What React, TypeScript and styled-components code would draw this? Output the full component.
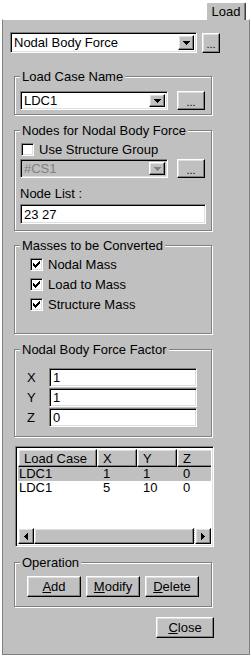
import styled, { createGlobalStyle, css } from 'styled-components';

const GlobalStyle = createGlobalStyle`
  html, body {
    margin: 0;
    padding: 0;
    background: #fff;
  }
  body {
    font-family: "Liberation Sans", Arial, sans-serif;
    font-size: 13px;
    color: #000;
  }
  * {
    box-sizing: border-box;
  }
`;

const face = '#c0c0c0';

const raised = css`
  border: 1px solid;
  border-color: #fff #000 #000 #fff;
  box-shadow: inset -1px -1px 0 #808080, inset 1px 1px 0 #dfdfdf;
  background: ${face};
`;

const sunken = css`
  border: 1px solid;
  border-color: #808080 #fff #fff #808080;
  box-shadow: inset 1px 1px 0 #000, inset -1px -1px 0 #dfdfdf;
`;

const Window = styled.div`
  width: 251px;
  height: 657px;
  display: flex;
  flex-direction: column;
`;

const TabStrip = styled.div`
  height: 19px;
  display: flex;
  justify-content: flex-end;
  align-items: flex-end;
  padding-right: 5px;
`;

const Tab = styled.div`
  position: relative;
  z-index: 1;
  width: 40px;
  height: 18px;
  margin-bottom: -1px;
  background: ${face};
  border-left: 1px solid #fff;
  border-top: 1px solid #fff;
  border-right: 1px solid #404040;
  border-radius: 2px 2px 0 0;
  box-shadow: inset -1px 0 0 #808080;
  display: flex;
  align-items: center;
  justify-content: center;
  line-height: 15px;
`;

const Panel = styled.div`
  margin-left: 2px;
  width: 248px;
  height: 636px;
  background: ${face};
  border: 1px solid #808080;
  border-top-color: #fff;
  padding: 12px 0 0 7px;
  display: flex;
  flex-direction: column;
  align-items: flex-start;
`;

const Row = styled.div<{ $gap: number }>`
  display: flex;
  align-items: center;
  gap: ${(p) => p.$gap}px;
`;

const Combo = styled.div<{ $w: number; $h: number; $disabled?: boolean }>`
  ${sunken}
  width: ${(p) => p.$w}px;
  height: ${(p) => p.$h}px;
  background: ${(p) => (p.$disabled ? face : '#fff')};
  color: ${(p) => (p.$disabled ? '#808080' : '#000')};
  display: flex;
  align-items: stretch;
  padding: 2px 2px 2px 3px;
`;

const ComboText = styled.div`
  flex: 1;
  display: flex;
  align-items: center;
  line-height: 15px;
  white-space: nowrap;
  overflow: hidden;
`;

const ArrowBtn = styled.div<{ $w?: number }>`
  ${raised}
  width: ${(p) => p.$w ?? 16}px;
  flex: none;
  display: flex;
  align-items: center;
  justify-content: center;
`;

const Button = styled.button<{ $w: number; $h: number }>`
  ${raised}
  width: ${(p) => p.$w}px;
  height: ${(p) => p.$h}px;
  padding: 0;
  font-family: inherit;
  font-size: 13px;
  color: #000;
  line-height: 15px;
  display: flex;
  align-items: center;
  justify-content: center;
  cursor: default;

  u {
    text-decoration: underline;
    text-underline-offset: 1px;
  }
`;

const Dots = styled.span`
  font-size: 11px;
  padding-top: 3px;
  letter-spacing: 0;
`;

const Group = styled.div<{ $mt: number; $pad: string }>`
  position: relative;
  margin: ${(p) => p.$mt}px 0 0 4px;
  width: 198px;
  border: 1px solid #808080;
  box-shadow: inset 1px 1px 0 #fff, 1px 1px 0 #fff;
  padding: ${(p) => p.$pad};
  display: flex;
  flex-direction: column;
  align-items: flex-start;
`;

const Legend = styled.span`
  position: absolute;
  top: -8px;
  left: 5px;
  padding: 0 2px;
  background: ${face};
  line-height: 15px;
  white-space: nowrap;
`;

const CheckRow = styled.label<{ $ml: number }>`
  display: flex;
  align-items: center;
  gap: 5px;
  height: 13px;
  margin-left: ${(p) => p.$ml}px;
  line-height: 15px;
`;

const CheckList = styled.div`
  display: flex;
  flex-direction: column;
  gap: 7px;
  margin-left: 10px;
`;

const Box = styled.span`
  ${sunken}
  width: 13px;
  height: 13px;
  background: #fff;
  display: flex;
  padding: 2px 0 0 2px;
  flex: none;
`;

const FieldLabel = styled.div<{ $mt: number }>`
  margin-top: ${(p) => p.$mt}px;
  line-height: 15px;
`;

const TextBox = styled.div<{ $w: number; $h: number; $mt?: number }>`
  ${sunken}
  width: ${(p) => p.$w}px;
  height: ${(p) => p.$h}px;
  margin-top: ${(p) => p.$mt ?? 0}px;
  background: #fff;
  padding: 0 3px;
  display: flex;
  align-items: center;
  line-height: 15px;
`;

const FactorGrid = styled.div`
  display: grid;
  grid-template-columns: 22px 148px;
  grid-auto-rows: 20px;
  align-items: center;
  padding-left: 7px;
`;

const Axis = styled.span`
  line-height: 15px;
`;

const List = styled.div`
  ${sunken}
  margin: 9px 0 0 5px;
  width: 199px;
  height: 101px;
  background: #fff;
  padding: 2px;
  display: flex;
  flex-direction: column;
`;

const HeaderRow = styled.div`
  display: flex;
  height: 18px;
  overflow: hidden;
  flex: none;
`;

const HeadCell = styled.div<{ $w: number }>`
  ${raised}
  width: ${(p) => p.$w}px;
  flex: none;
  padding-left: 5px;
  line-height: 15px;
  display: flex;
  align-items: center;
`;

const DataRow = styled.div<{ $selected?: boolean }>`
  display: flex;
  height: 14px;
  line-height: 14px;
  background: ${(p) => (p.$selected ? face : '#fff')};
  flex: none;
`;

const DataCell = styled.div<{ $w: number; $pl: number }>`
  width: ${(p) => p.$w}px;
  flex: none;
  padding-left: ${(p) => p.$pl}px;
  white-space: nowrap;
`;

const Spacer = styled.div`
  flex: 1;
`;

const HScroll = styled.div`
  display: flex;
  height: 16px;
  flex: none;
`;

const Thumb = styled.div`
  ${raised}
  width: 160px;
`;

const Track = styled.div`
  flex: 1;
  background: repeating-conic-gradient(#fff 0 25%, ${face} 0 50%) 0 0 / 2px 2px;
`;

const CloseWrap = styled.div`
  margin: 10px 0 0 146px;
`;

function Tri({ dir, color = '#000' }: { dir: 'down' | 'left' | 'right'; color?: string }) {
  const rects =
    dir === 'down'
      ? [
          [0, 0, 7, 1],
          [1, 1, 5, 1],
          [2, 2, 3, 1],
          [3, 3, 1, 1],
        ]
      : dir === 'left'
      ? [
          [0, 3, 1, 1],
          [1, 2, 1, 3],
          [2, 1, 1, 5],
          [3, 0, 1, 7],
        ]
      : [
          [0, 0, 1, 7],
          [1, 1, 1, 5],
          [2, 2, 1, 3],
          [3, 3, 1, 1],
        ];
  const w = dir === 'down' ? 7 : 4;
  const h = dir === 'down' ? 4 : 7;
  return (
    <svg width={w} height={h} viewBox={`0 0 ${w} ${h}`} shapeRendering="crispEdges">
      {rects.map(([x, y, rw, rh], i) => (
        <rect key={i} x={x} y={y} width={rw} height={rh} fill={color} />
      ))}
    </svg>
  );
}

function Check() {
  // classic 7x7 tick, one 3px run per column
  const tops = [2, 3, 4, 3, 2, 1, 0];
  return (
    <svg width={7} height={7} viewBox="0 0 7 7" shapeRendering="crispEdges">
      {tops.map((t, i) => (
        <rect key={i} x={i} y={t} width={1} height={3} fill="#000" />
      ))}
    </svg>
  );
}

function CheckBox({ label, checked, ml = 0 }: { label: string; checked?: boolean; ml?: number }) {
  return (
    <CheckRow $ml={ml}>
      <Box>{checked && <Check />}</Box>
      <span>{label}</span>
    </CheckRow>
  );
}

function Dropdown({ value, w, h, disabled }: { value: string; w: number; h: number; disabled?: boolean }) {
  return (
    <Combo $w={w} $h={h} $disabled={disabled}>
      <ComboText>{value}</ComboText>
      <ArrowBtn>
        <Tri dir="down" color={disabled ? '#808080' : '#000'} />
      </ArrowBtn>
    </Combo>
  );
}

const columns = [79, 40, 40, 60];

const rows = [
  { lc: 'LDC1', x: '1', y: '1', z: '0', selected: true },
  { lc: 'LDC1', x: '5', y: '10', z: '0' },
];

export default function App() {
  return (
    <Window>
      <GlobalStyle />
      <TabStrip>
        <Tab>Load</Tab>
      </TabStrip>
      <Panel>
        <Row $gap={5}>
          <Dropdown value="Nodal Body Force" w={187} h={21} />
          <Button $w={18} $h={20}>
            <Dots>...</Dots>
          </Button>
        </Row>

        <Group $mt={23} $pad="14px 0 4px 5px">
          <Legend>Load Case Name</Legend>
          <Row $gap={9}>
            <Dropdown value="LDC1" w={148} h={19} />
            <Button $w={28} $h={19}>
              <Dots>...</Dots>
            </Button>
          </Row>
        </Group>

        <Group $mt={15} $pad="12px 0 6px 5px">
          <Legend>Nodes for Nodal Body Force</Legend>
          <CheckBox label="Use Structure Group" ml={1} />
          <Row $gap={9} style={{ marginTop: 3 }}>
            <Dropdown value="#CS1" w={148} h={19} disabled />
            <Button $w={28} $h={19} disabled>
              <Dots>...</Dots>
            </Button>
          </Row>
          <FieldLabel $mt={8}>Node List :</FieldLabel>
          <TextBox $w={186} $h={20} $mt={3}>
            23 27
          </TextBox>
        </Group>

        <Group $mt={14} $pad="12px 0 22px 5px">
          <Legend>Masses to be Converted</Legend>
          <CheckList>
            <CheckBox label="Nodal Mass" checked />
            <CheckBox label="Load to Mass" checked />
            <CheckBox label="Structure Mass" checked />
          </CheckList>
        </Group>

        <Group $mt={15} $pad="17px 0 9px 5px">
          <Legend>Nodal Body Force Factor</Legend>
          <FactorGrid>
            <Axis>X</Axis>
            <TextBox $w={148} $h={19}>1</TextBox>
            <Axis>Y</Axis>
            <TextBox $w={148} $h={19}>1</TextBox>
            <Axis>Z</Axis>
            <TextBox $w={148} $h={19}>0</TextBox>
          </FactorGrid>
        </Group>

        <List>
          <HeaderRow>
            <HeadCell $w={columns[0]}>Load Case</HeadCell>
            <HeadCell $w={columns[1]}>X</HeadCell>
            <HeadCell $w={columns[2]}>Y</HeadCell>
            <HeadCell $w={columns[3]}>Z</HeadCell>
          </HeaderRow>
          {rows.map((r, i) => (
            <DataRow key={i} $selected={r.selected}>
              <DataCell $w={columns[0]} $pl={1}>{r.lc}</DataCell>
              <DataCell $w={columns[1]} $pl={6}>{r.x}</DataCell>
              <DataCell $w={columns[2]} $pl={6}>{r.y}</DataCell>
              <DataCell $w={columns[3]} $pl={6}>{r.z}</DataCell>
            </DataRow>
          ))}
          <Spacer />
          <HScroll>
            <ArrowBtn>
              <Tri dir="left" />
            </ArrowBtn>
            <Thumb />
            <Track />
            <ArrowBtn>
              <Tri dir="right" />
            </ArrowBtn>
          </HScroll>
        </List>

        <Group $mt={15} $pad="13px 0 9px 12px">
          <Legend>Operation</Legend>
          <Row $gap={5}>
            <Button $w={54} $h={21}>
              <u>A</u>dd
            </Button>
            <Button $w={54} $h={21}>
              <u>M</u>odify
            </Button>
            <Button $w={54} $h={21}>
              <u>D</u>elete
            </Button>
          </Row>
        </Group>

        <CloseWrap>
          <Button $w={58} $h={21}>
            <u>C</u>lose
          </Button>
        </CloseWrap>
      </Panel>
    </Window>
  );
}
